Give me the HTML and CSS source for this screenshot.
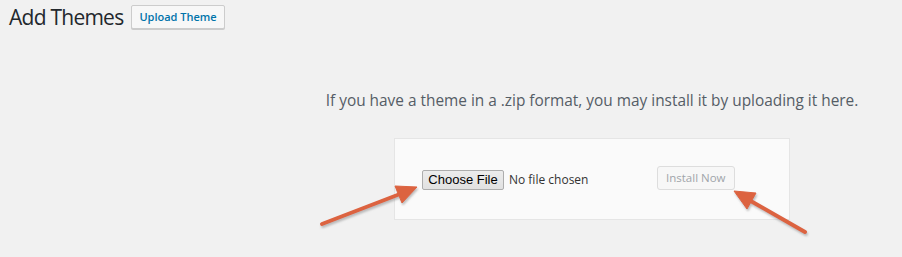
FILE: index.html
```html
<!DOCTYPE html>
<html lang="en">
<head>
    <meta charset="UTF-8">
    <meta name="viewport" content="width=device-width, initial-scale=1.0">
    <title>Add Themes</title>
    <link rel="stylesheet" href="styles.css">
</head>
<body>
    <div class="wrap">
        <div class="page-head">
            <h1>Add Themes</h1>
            <a class="title-action" href="#">Upload Theme</a>
        </div>

        <div class="upload-theme">
            <p class="install-help">If you have a theme in a .zip format, you may install it by uploading it here.</p>
            <form class="upload-form">
                <div class="file-field">
                    <span class="file-btn">Choose File</span>
                    <span class="file-name">No file chosen</span>
                </div>
                <button class="install-btn" type="button" disabled>Install Now</button>
            </form>
        </div>
    </div>

    <!-- annotation arrows drawn over the screenshot -->
    <svg class="arrows" width="902" height="257" viewBox="0 0 902 257">
        <defs>
            <filter id="shadow" x="-20%" y="-20%" width="140%" height="140%">
                <feDropShadow dx="1" dy="2" stdDeviation="1" flood-color="#888" flood-opacity="0.55"/>
            </filter>
        </defs>
        <g filter="url(#shadow)" fill="#dc6340" stroke="#dc6340">
            <line x1="322" y1="224" x2="400" y2="194" stroke-width="4" stroke-linecap="round"/>
            <polygon points="417,187 395,186 402,203" stroke-width="1" stroke-linejoin="round"/>
            <line x1="805" y1="232" x2="749" y2="200" stroke-width="4" stroke-linecap="round"/>
            <polygon points="734,191 756,193 747,209" stroke-width="1" stroke-linejoin="round"/>
        </g>
    </svg>
</body>
</html>
```

FILE: styles.css
```css
body { margin: 0; background: #f1f1f1; font-family: "Open Sans", Arial, sans-serif; color: #23282d; }
.wrap { position: relative; width: 902px; height: 257px; }
.page-head { display: flex; align-items: center; gap: 8px; padding: 4px 0 0 9px; }
.page-head h1 { margin: 0; font-size: 21px; font-weight: 400; line-height: 26px; letter-spacing: -0.75px; }
.title-action { display: inline-block; height: 22px; line-height: 22px; padding: 0 7px; border: 1px solid #ccc; border-radius: 2px; background: #f7f7f7; box-shadow: 0 1px 0 #ccc; color: #0073aa; font-size: 11px; font-weight: 600; text-decoration: none; }
.upload-theme { margin-left: 282px; width: 620px; display: flex; flex-direction: column; align-items: center; }
.install-help { margin: 61px 0 0; color: #555d66; font-size: 15.4px; line-height: 20px; }
.upload-form { display: flex; align-items: center; width: 396px; height: 82px; box-sizing: border-box; margin-top: 27px; padding: 0 0 0 27px; background: #fafafa; border: 1px solid #e5e5e5; }
.file-field { display: flex; align-items: center; width: 235px; font-family: "Liberation Sans", Arial, sans-serif; font-size: 13px; }
.file-btn { display: inline-block; width: 80px; height: 18px; line-height: 18px; text-align: center; border: 1px solid #adadad; border-radius: 2px; background: linear-gradient(#ececec, #e1e1e1); color: #000; margin-top: 2px; }
.file-name { margin-left: 5px; color: #333; font-family: "Open Sans", Arial, sans-serif; font-size: 12px; }
.install-btn { height: 24px; padding: 0 8px; border: 1px solid #ddd; border-radius: 3px; background: #f7f7f7; color: #a0a5aa; font-family: "Open Sans", Arial, sans-serif; font-size: 11.5px; margin-top: -3px; }
.arrows { position: absolute; left: 0; top: 0; pointer-events: none; }
```
